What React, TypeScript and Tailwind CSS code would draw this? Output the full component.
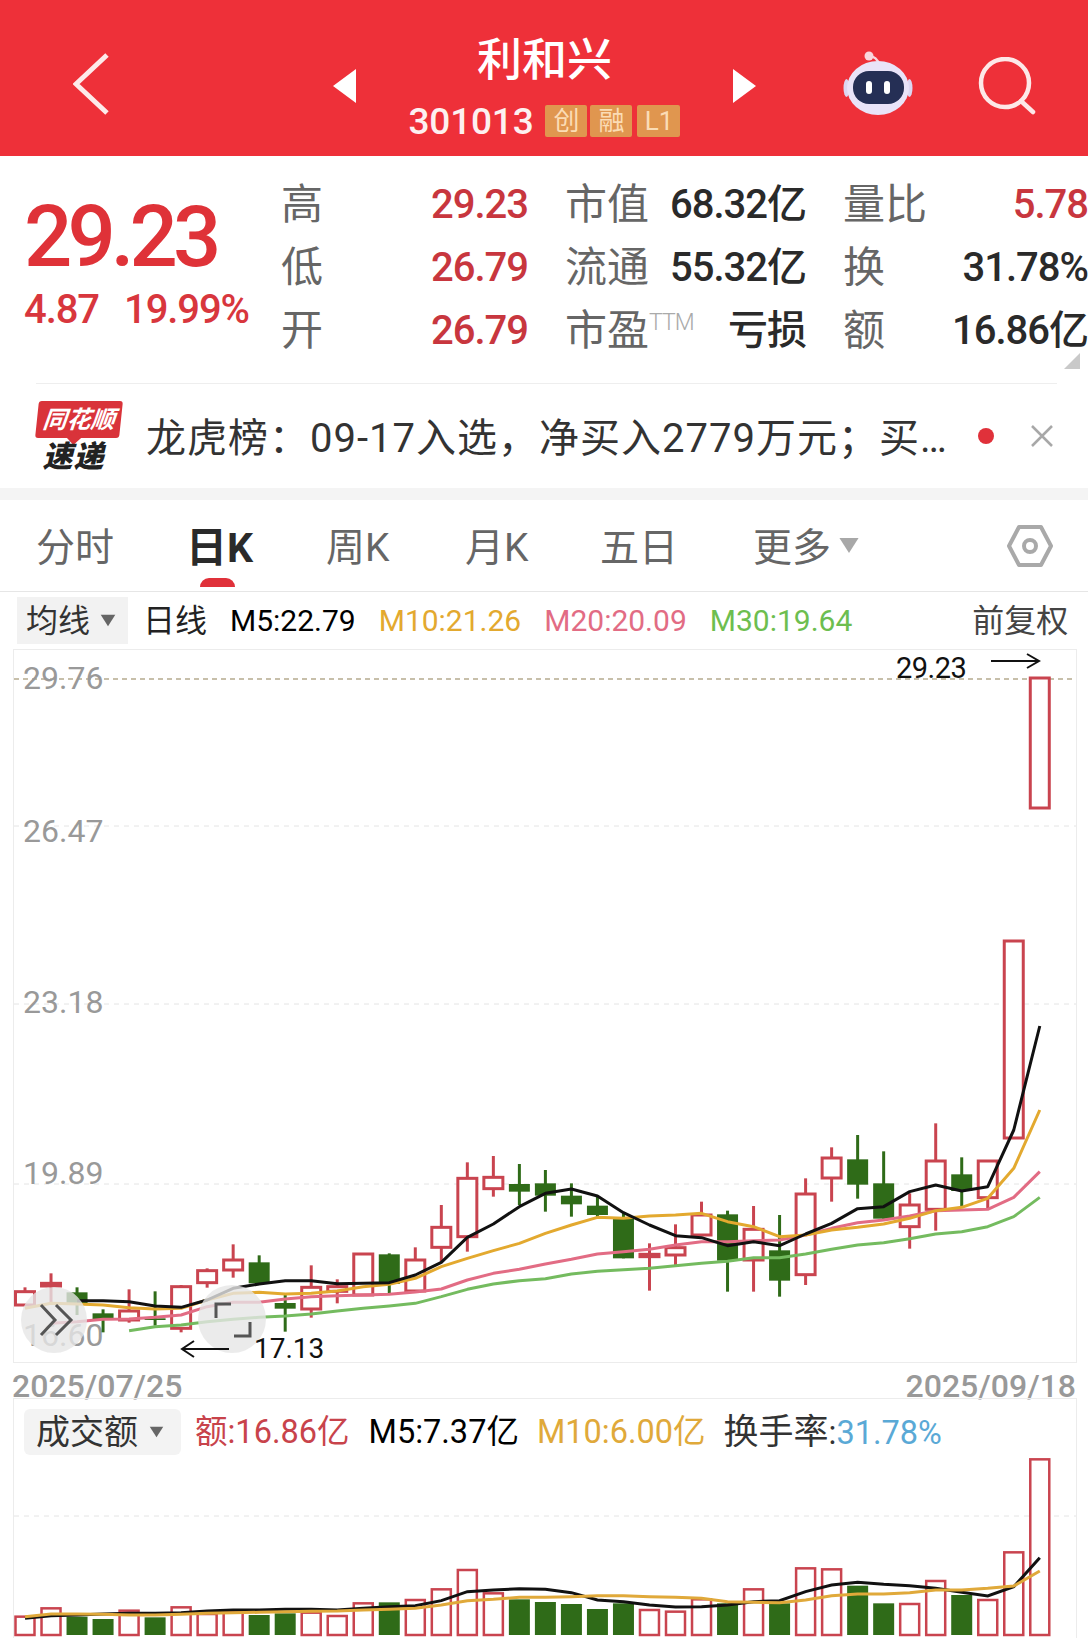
import React from 'react';

type Candle = [number, number, number, number, 0 | 1];

const RED = '#c9444f';
const GREEN = '#2f6b18';

const cx = (i: number) => 25 + i * 26.02;

// [high, bodyTop, bodyBottom, low, isUp]
const candlesA: Candle[] = [
  [472, 485, 525, 525, 1], [430, 460, 468, 520, 1], [472, 487, 520, 555, 0], [538, 550, 568, 607, 0],
  [478, 543, 570, 578, 1], [484, 565, 570, 587, 0], [465, 470, 595, 607, 1], [415, 422, 458, 473, 1],
  [343, 390, 420, 443, 1], [376, 397, 460, 465, 0], [495, 519, 536, 605, 0], [406, 472, 537, 563, 1],
  [448, 470, 484, 520, 1], [372, 372, 495, 497, 1], [370, 373, 462, 493, 0], [352, 390, 483, 485, 1],
  [225, 292, 352, 395, 1], [97, 145, 320, 365, 1], [78, 142, 176, 200, 1], [102, 162, 185, 225, 0],
];
const candlesB: Candle[] = [
  [240, 280, 317, 365, 0], [280, 317, 343, 380, 0], [315, 347, 375, 380, 0], [370, 385, 505, 505, 0],
  [460, 493, 500, 602, 1], [403, 473, 495, 528, 1], [335, 375, 435, 437, 1], [362, 373, 512, 605, 0],
  [348, 418, 510, 605, 1], [375, 481, 572, 620, 0], [265, 312, 554, 585, 1], [172, 204, 264, 335, 1],
  [135, 208, 284, 326, 0], [184, 280, 386, 386, 0], [310, 345, 410, 476, 1], [100, 213, 358, 422, 1],
  [202, 253, 303, 350, 0], [213, 213, 323, 360, 1],
];

const line = (start: number, early: number[], late: number[]) =>
  [
    ...early.map((v, i) => `${cx(start + i)},${1130 + v / 3}`),
    ...late.map((v, i) => `${cx(20 + i)},${1090 + v / 3}`),
  ].join(' ');

const ma5 = line(2,
  [512, 512, 515, 528, 532, 510, 475, 462, 452, 452, 461, 460, 458, 435, 397, 322, 282, 230],
  [310, 297, 318, 368, 405, 437, 443, 467, 455, 467, 432, 400, 356, 350, 305, 285, 303, 290, 120, -192]);
const ma10 = line(0,
  [535, 520, 522, 525, 533, 537, 535, 510, 490, 487, 492, 490, 483, 470, 463, 445, 410, 385, 362, 340],
  [430, 405, 382, 385, 378, 375, 370, 395, 410, 440, 435, 420, 412, 402, 385, 362, 352, 325, 235, 60]);
const ma20 = line(1,
  [580, 575, 568, 567, 562, 555, 530, 517, 517, 507, 500, 497, 495, 493, 486, 477, 450, 430, 418],
  [522, 508, 492, 485, 478, 465, 455, 455, 452, 450, 435, 415, 398, 390, 378, 362, 360, 358, 322, 245]);
const ma30 = line(4,
  [602, 590, 585, 575, 568, 562, 558, 552, 543, 535, 528, 520, 500, 478, 462, 452],
  [566, 552, 544, 539, 535, 527, 520, 514, 503, 503, 492, 478, 465, 458, 446, 432, 425, 410, 380, 322]);

// volume bars: [top, isUp]
const volumes: [number, 0 | 1][] = [
  [680, 1], [655, 1], [680, 0], [687, 0], [662, 1], [682, 0], [652, 1], [672, 1], [665, 1], [675, 0],
  [670, 0], [668, 1], [678, 1], [640, 1], [637, 0], [630, 1], [598, 1], [540, 1], [610, 1], [628, 0],
  [636, 0], [642, 0], [657, 0], [640, 0], [660, 1], [665, 1], [628, 1], [640, 0], [598, 1], [640, 0],
  [535, 1], [538, 1], [587, 0], [640, 0], [642, 1], [573, 1], [615, 0], [630, 1], [487, 1], [208, 1],
];
const volLine = (vals: number[]) => vals.map((v, i) => `${cx(i)},${1390 + v / 3}`).join(' ');
const volM5 = volLine([685, 677, 675, 672, 670, 670, 668, 663, 660, 660, 658, 658, 660, 655, 650, 647, 632, 605, 600, 596, 598, 608, 630, 635, 645, 651, 650, 645, 635, 632, 605, 585, 577, 583, 587, 595, 607, 618, 590, 503]);
const volM10 = volLine([680, 672, 672, 673, 675, 675, 673, 670, 668, 667, 665, 664, 663, 660, 658, 655, 645, 632, 628, 622, 622, 620, 617, 617, 620, 622, 625, 635, 637, 638, 630, 617, 612, 612, 608, 600, 600, 595, 588, 543]);

const CandleMark = ({ c, i, base }: { c: Candle; i: number; base: number }) => {
  const [hi, top, bot, lo, up] = c;
  const y = (v: number) => base + v / 3;
  const x = cx(i);
  const color = up ? RED : GREEN;
  return (
    <g>
      <line x1={x} x2={x} y1={y(hi)} y2={y(lo)} stroke={color} strokeWidth={3} />
      {up ? (
        <rect x={x - 9.5} y={y(top)} width={19} height={Math.max(y(bot) - y(top), 1)} fill="#fff" stroke={color} strokeWidth={3} />
      ) : (
        <rect x={x - 10.5} y={y(top)} width={21} height={y(bot) - y(top)} fill={color} />
      )}
    </g>
  );
};

const QuoteCell = ({ label, value, valueClass }: { label: React.ReactNode; value: string; valueClass: string }) => (
  <div className="flex items-center justify-between">
    <span className="text-[42px] text-[#666] leading-none whitespace-nowrap">{label}</span>
    <span className={`text-[40px] font-medium leading-none tracking-[-1px] ${valueClass}`}>{value}</span>
  </div>
);

const Caret = ({ className }: { className: string }) => (
  <svg viewBox="0 0 20 16" className={className}>
    <path d="M1 1h18L10 15z" fill="currentColor" />
  </svg>
);

const tabs = [
  { label: '分时', width: 'w-[150px]' },
  { label: '日K', width: 'w-[140px]', active: true },
  { label: '周K', width: 'w-[139px]' },
  { label: '月K', width: 'w-[135px]' },
  { label: '五日', width: 'w-[153px]' },
];

export default function App() {
  return (
    <div className="relative w-[1088px] h-[1638px] overflow-hidden bg-white font-['Roboto','Noto_Sans_CJK_SC',sans-serif]">
      {/* Header */}
      <header className="flex h-[156px] items-center bg-[#ee3039] text-white">
        <svg viewBox="0 0 36 62" className="ml-[73px] h-[62px] w-[36px] translate-y-[6px]" fill="none" stroke="#fdeaea" strokeWidth={5}>
          <path d="M34 2 3 31l31 29" strokeLinejoin="miter" />
        </svg>
        <svg viewBox="0 0 23 34" className="ml-[224px] h-[34px] w-[23px] translate-y-[8px]">
          <path d="M23 0v34L0 17z" fill="#fff" />
        </svg>
        <div className="flex w-[377px] flex-col items-center pt-[10px]">
          <div className="translate-y-[4px] text-[45px] font-medium leading-[60px]">利和兴</div>
          <div className="mt-[16px] flex items-center">
            <span className="mr-[12px] text-[37px] font-medium leading-none tracking-[-0.2px] text-[#fdf0f0]">301013</span>
            <span className="flex h-[32px] w-[42px] items-center justify-center rounded-[2px] bg-[#e0964f] text-[26px] leading-none text-[#fbdcb5]">创</span>
            <span className="ml-[3px] flex h-[32px] w-[42px] items-center justify-center rounded-[2px] bg-[#e0964f] text-[26px] leading-none text-[#fbdcb5]">融</span>
            <span className="ml-[5px] flex h-[32px] w-[43px] items-center justify-center rounded-[2px] bg-[#e0964f] text-[26px] leading-none text-[#fbdcb5]">L1</span>
          </div>
        </div>
        <svg viewBox="0 0 23 34" className="h-[34px] w-[23px] translate-y-[8px]">
          <path d="M0 0v34l23-17z" fill="#fff" />
        </svg>
        {/* Robot */}
        <svg viewBox="0 0 70 66" className="ml-[87px] h-[66px] w-[70px] translate-y-[6px]">
          <path d="M26 6c5-1 9 2 10 8" fill="none" stroke="#f9d6dd" strokeWidth={2.5} />
          <circle cx="26" cy="5" r="4.5" fill="#f9d6dd" />
          <ellipse cx="3.5" cy="37" rx="3" ry="9" fill="#dcd6f2" />
          <ellipse cx="66.5" cy="37" rx="3" ry="9" fill="#dcd6f2" />
          <ellipse cx="35" cy="37" rx="31" ry="27" fill="#e9e3f8" />
          <rect x="10" y="20" width="51" height="33" rx="16" fill="#252f55" />
          <rect x="23" y="30" width="6" height="13" rx="3" fill="#fff" />
          <rect x="41" y="30" width="6" height="13" rx="3" fill="#fff" />
        </svg>
        <svg viewBox="0 0 58 58" className="ml-[65px] h-[58px] w-[58px] translate-y-[8px]" fill="none" stroke="#fde8e8" strokeWidth={4.5}>
          <circle cx="27" cy="26" r="24" />
          <path d="m43 44 12 11" strokeLinecap="round" />
        </svg>
      </header>

      {/* Quote */}
      <section className="relative flex h-[228px] pt-[16px]">
        <div className="w-[281px] pl-[24px] pt-[21px]">
          <div className="text-[85px] font-medium leading-[88px] tracking-[-4.9px] text-[#df3238]">29.23</div>
          <div className="mt-[9px] flex text-[40px] font-medium leading-none tracking-[-1.1px] text-[#d8363d]">
            <span className="w-[100px]">4.87</span>
            <span>19.99%</span>
          </div>
        </div>
        <div className="mt-[2px] grid h-[188px] w-[807px] grid-cols-[247px_241px_245px] grid-rows-3 gap-x-[37px]">
          <QuoteCell label="高" value="29.23" valueClass="text-[#c8363e]" />
          <QuoteCell label="市值" value="68.32亿" valueClass="text-[#2a2a2a]" />
          <QuoteCell label="量比" value="5.78" valueClass="text-[#c8363e]" />
          <QuoteCell label="低" value="26.79" valueClass="text-[#c8363e]" />
          <QuoteCell label="流通" value="55.32亿" valueClass="text-[#2a2a2a]" />
          <QuoteCell label="换" value="31.78%" valueClass="text-[#2a2a2a]" />
          <QuoteCell label="开" value="26.79" valueClass="text-[#c8363e]" />
          <QuoteCell
            label={<>市盈<span className="relative -top-[15px] text-[23px] font-light tracking-[-1px] text-[#aaa]">TTM</span></>}
            value="亏损"
            valueClass="text-[#2a2a2a]"
          />
          <QuoteCell label="额" value="16.86亿" valueClass="text-[#2a2a2a]" />
        </div>
        <svg viewBox="0 0 16 16" className="absolute right-[8px] top-[197px] h-[16px] w-[16px]">
          <path d="M16 0v16H0z" fill="#c9c9c9" />
        </svg>
        <div className="absolute bottom-0 left-[36px] h-[1px] w-[1021px] bg-[#eeeeee]" />
      </section>

      {/* News strip */}
      <section className="flex h-[104px] items-center">
        <div className="ml-[36px] flex w-[85px] flex-col items-center">
          <div className="relative flex h-[37px] w-[84px] -skew-x-6 items-center justify-center rounded-[3px] bg-[#d9333a]">
            <span className="text-[24px] font-bold italic leading-none text-white">同花顺</span>
            <span className="absolute -bottom-[5px] left-[34px] h-[10px] w-[10px] rotate-45 bg-[#d9333a]" />
          </div>
          <div className="mt-[5px] -translate-x-[5px] text-[30px] font-black italic leading-[28px] tracking-[1px] text-[#222]">速递</div>
        </div>
        <div className="ml-[25px] w-[806px] translate-y-[3px] whitespace-nowrap text-[40px] leading-none tracking-[1px] text-[#333]">龙虎榜：09-17入选，净买入2779万元；买…</div>
        <span className="ml-[26px] h-[16px] w-[16px] rounded-full bg-[#e0313a]" />
        <svg viewBox="0 0 24 24" className="ml-[36px] h-[24px] w-[24px]" fill="none" stroke="#a8a8a8" strokeWidth={2.5}>
          <path d="m2 2 20 20M22 2 2 22" />
        </svg>
      </section>
      <div className="h-[12px] bg-[#f4f4f4]" />

      {/* Period tabs */}
      <nav className="relative flex h-[92px] items-center border-b border-[#e6e6e6] pl-[36px]">
        {tabs.map((t) => (
          <div key={t.label} className={`relative shrink-0 translate-y-[3px] leading-none ${t.width} ${t.active ? 'text-[41px] font-bold text-[#2a2a2a]' : 'text-[39px] text-[#666]'}`}>
            {t.label}
            {t.active && <span className="absolute left-[14px] top-[50px] h-[9px] w-[35px] rounded-t-full bg-[#e0313a]" />}
          </div>
        ))}
        <div className="flex translate-y-[3px] items-center text-[39px] leading-none text-[#666]">
          更多
          <Caret className="ml-[7px] h-[17px] w-[22px] -translate-y-[3px] text-[#a8a8a8]" />
        </div>
        <svg viewBox="0 0 46 42" className="ml-[147px] h-[42px] w-[46px]" fill="none" stroke="#a9a9a9">
          <path d="M12 2h22l10 19-10 19H12L2 21z" strokeWidth={4} strokeLinejoin="round" />
          <circle cx="23" cy="21" r="6" strokeWidth={4} />
        </svg>
      </nav>

      {/* MA legend */}
      <div className="flex h-[57px] items-center text-[30px] leading-none">
        <div className="ml-[17px] flex h-[47px] w-[111px] items-center bg-[#f2f2f2] pl-[9px] text-[32px] text-[#333]">
          均线
          <Caret className="ml-[9px] h-[13px] w-[18px] text-[#666]" />
        </div>
        <span className="ml-[15px] text-[32px] text-[#222]">日线</span>
        <span className="ml-[23px] text-black">M5:22.79</span>
        <span className="ml-[23px] text-[#e3a92f]">M10:21.26</span>
        <span className="ml-[23px] text-[#e26c84]">M20:20.09</span>
        <span className="ml-[23px] text-[#6dbe4f]">M30:19.64</span>
        <span className="ml-[120px] text-[32px] text-[#444]">前复权</span>
      </div>

      {/* Price chart */}
      <div className="ml-[13px] mr-[11px] h-[714px] border border-[#ececec]">
        <svg viewBox="14 650 1062 712" className="block h-[712px] w-[1062px] overflow-visible" fontFamily="Roboto">
          {[826, 1004, 1184].map((y) => (
            <line key={y} x1={14} x2={1076} y1={y} y2={y} stroke="#e4e4e4" strokeDasharray="5 5" />
          ))}
          <line x1={14} x2={1076} y1={679} y2={679} stroke="#b5aa8e" strokeWidth={1.5} strokeDasharray="5 4" />
          <g fill="#999" fontSize={32}>
            <text x={23} y={689}>29.76</text>
            <text x={23} y={842}>26.47</text>
            <text x={23} y={1013}>23.18</text>
            <text x={23} y={1184}>19.89</text>
            <text x={23} y={1346}>16.60</text>
          </g>
          {candlesA.map((c, i) => <CandleMark key={i} c={c} i={i} base={1130} />)}
          {candlesB.map((c, i) => <CandleMark key={i} c={c} i={i + 20} base={1090} />)}
          <rect x={cx(38) - 9.5} y={941} width={19} height={197} fill="#fff" stroke={RED} strokeWidth={3} />
          <rect x={cx(39) - 9.5} y={678} width={19} height={130} fill="#fff" stroke={RED} strokeWidth={3} />
          <g fill="none" strokeLinejoin="round" strokeWidth={3}>
            <polyline points={ma30} stroke="#74bb5f" />
            <polyline points={ma20} stroke="#e26c84" />
            <polyline points={ma10} stroke="#e3a92f" />
            <polyline points={ma5} stroke="#111" />
          </g>
          {/* Floating round buttons */}
          <circle cx={54} cy={1320} r={33} fill="#e6e6e6" fillOpacity={0.8} />
          <circle cx={232} cy={1319} r={34} fill="#e6e6e6" fillOpacity={0.8} />
          <g fill="none" stroke="#555" strokeWidth={3}>
            <path d="m41 1305 14 15-14 15M56 1305l15 15-15 15" />
            <path d="M216 1318v-14h15M250 1322v14h-16" />
          </g>
          <text x={896} y={678} fontSize={29} letterSpacing={-0.5} fill="#111">29.23</text>
          <path d="M991 661h48m-12-7 12 7-12 7" fill="none" stroke="#111" strokeWidth={2} />
          <text x={254} y={1358} fontSize={28} fill="#111">17.13</text>
          <path d="M229 1349h-47m12-8-12 8 12 8" fill="none" stroke="#111" strokeWidth={2} />
        </svg>
      </div>

      {/* Date axis */}
      <div className="flex h-[35px] justify-between pl-[12px] pr-[12px] pt-[11px] text-[32px] font-medium leading-[24px] text-[#999]">
        <span>2025/07/25</span>
        <span>2025/09/18</span>
      </div>

      {/* Volume chart */}
      <div className="relative ml-[13px] mr-[11px] h-[240px] border border-b-0 border-[#ececec]">
        <svg viewBox="14 1399 1062 239" className="block h-[239px] w-[1062px]">
          <line x1={14} x2={1076} y1={1516} y2={1516} stroke="#e4e4e4" strokeDasharray="5 5" />
          {volumes.map(([top, up], i) =>
            up ? (
              <rect key={i} x={cx(i) - 9.5} y={1390 + top / 3} width={19} height={1635 - 1390 - top / 3} fill="#fff" stroke={RED} strokeWidth={2.5} />
            ) : (
              <rect key={i} x={cx(i) - 10.5} y={1390 + top / 3} width={21} height={1635 - 1390 - top / 3} fill={GREEN} />
            ),
          )}
          <polyline points={volM5} fill="none" stroke="#111" strokeWidth={3} />
          <polyline points={volM10} fill="none" stroke="#e0a93a" strokeWidth={3} />
        </svg>
        <div className="absolute left-[10px] top-[10px] flex items-center text-[32.5px] leading-none">
          <div className="flex h-[46px] w-[157px] items-center rounded-[6px] bg-[#f3f3f3] pl-[12px] text-[34px] text-[#333]">
            成交额
            <Caret className="ml-[10px] h-[12px] w-[17px] text-[#666]" />
          </div>
          <span className="ml-[14px] text-[#c8434b]">额:16.86亿</span>
          <span className="ml-[19px] text-black">M5:7.37亿</span>
          <span className="ml-[18px] text-[#e0a93a]">M10:6.00亿</span>
          <span className="ml-[18px] text-[#333]"><span className="text-[35px]">换手率</span>:<span className="text-[#5aa9d6]">31.78%</span></span>
        </div>
      </div>
    </div>
  );
}
